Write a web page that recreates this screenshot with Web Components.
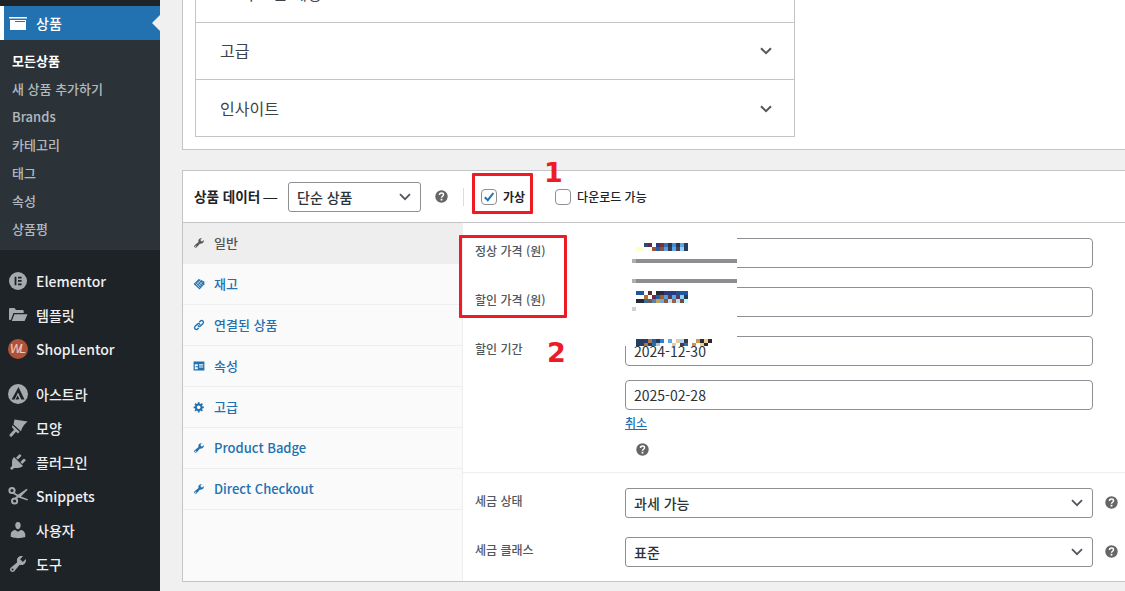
<!DOCTYPE html>
<html lang="ko">
<head>
<meta charset="utf-8">
<title>상품 편집</title>
<style>
  html, body { margin: 0; height: 591px; overflow: hidden; background: #f0f0f1; }
  body { font-family: "Noto Sans CJK KR", "Noto Sans", sans-serif; }
</style>
</head>
<body>
<admin-page>
  <admin-sidebar slot="sidebar">
    <menu-item icon="box" current>상품</menu-item>
    <sub-menu>
      <sub-item current>모든상품</sub-item>
      <sub-item>새 상품 추가하기</sub-item>
      <sub-item>Brands</sub-item>
      <sub-item>카테고리</sub-item>
      <sub-item>태그</sub-item>
      <sub-item>속성</sub-item>
      <sub-item>상품평</sub-item>
    </sub-menu>
    <menu-group>
      <menu-item icon="elementor">Elementor</menu-item>
      <menu-item icon="folder">템플릿</menu-item>
      <menu-item icon="shoplentor">ShopLentor</menu-item>
    </menu-group>
    <menu-group>
      <menu-item icon="astra">아스트라</menu-item>
      <menu-item icon="brush">모양</menu-item>
      <menu-item icon="plug">플러그인</menu-item>
      <menu-item icon="scissors">Snippets</menu-item>
      <menu-item icon="users">사용자</menu-item>
      <menu-item icon="wrench">도구</menu-item>
    </menu-group>
  </admin-sidebar>

  <top-box>
    <box-row>그 기 모은 계정</box-row>
    <box-row>고급</box-row>
    <box-row>인사이트</box-row>
  </top-box>

  <product-data>
    <tab-item icon="wrench" current>일반</tab-item>
    <tab-item icon="tag">재고</tab-item>
    <tab-item icon="link">연결된 상품</tab-item>
    <tab-item icon="attrs">속성</tab-item>
    <tab-item icon="gear">고급</tab-item>
    <tab-item icon="wrench">Product Badge</tab-item>
    <tab-item icon="wrench">Direct Checkout</tab-item>

    <field-group slot="fields">
      <form-field label="정상 가격 (원)"><text-box></text-box></form-field>
      <form-field label="할인 가격 (원)"><text-box></text-box></form-field>
      <form-field label="할인 기간" tight>
        <text-box>2024-12-30</text-box>
        <text-box>2025-02-28</text-box>
        <cancel-link>취소</cancel-link>
        <help-mark class="below"></help-mark>
      </form-field>
    </field-group>
    <field-group slot="fields" last>
      <form-field label="세금 상태" help><select-box>과세 가능</select-box></form-field>
      <form-field label="세금 클래스" help><select-box>표준</select-box></form-field>
    </field-group>
  </product-data>

  <censor-block></censor-block>
  <red-mark style="left:472px;top:173px;width:61px;height:41px"></red-mark>
  <red-mark style="left:459px;top:235px;width:108px;height:83px"></red-mark>
  <red-number style="left:544px;top:157px">1</red-number>
  <red-number style="left:547px;top:337px">2</red-number>
</admin-page>

<script>
const ICONS = {
  box: '<path fill="currentColor" fill-rule="evenodd" d="M1 4h18v1.6H1zM2 7h16v10H2zM7 8v1h10V8z"/>',
  elementor: '<circle cx="10" cy="10" r="9" fill="currentColor"/><path fill="#1d2327" d="M6.6 5.8h1.8v8.4H6.6zM10 5.8h3.6v1.7H10zM10 9.1h3.6v1.7H10zM10 12.5h3.6v1.7H10z"/>',
  folder: '<path fill="currentColor" d="M1 4.5c0-.8.5-1.5 1.3-1.5h4.2l1.5 2h6.5c.7 0 1.2.5 1.2 1.2V8H5.5L2.8 15H2c-.6 0-1-.5-1-1zM6.4 9.2H19.5L16.6 16H3.8z"/>',
  shoplentor: '<circle cx="10" cy="10" r="10" fill="#b0523a"/><text x="10" y="14" text-anchor="middle" font-family="Liberation Sans, sans-serif" font-size="12" font-style="italic" fill="#ecd0c6" textLength="16">WL</text>',
  astra: '<circle cx="10" cy="10" r="10" fill="currentColor"/><path fill="#1d2327" d="M10.5 3l6 12.5h-3.2l-3.3-7-3.4 7H3.6zM9.6 11.2l1.8 3.8-1.5.5H7.6z"/>',
  brush: '<path fill="currentColor" d="M6.5 1.5L19.5 3.5 16 7l-2 3.2-1 3L5.5 6.5zM4.6 7.2l7 6.6-1.6 1.6-2-1.6-4.2 4.6c-1.1 1.1-3.1-.6-2-2.1l4.3-4.6-2.2-2.6z"/>',
  plug: '<path fill="currentColor" d="M13.11 4.36L9.87 7.6 8 5.73l3.24-3.24c.35-.34 1.05-.2 1.56.32.52.51.66 1.21.31 1.55zm-8 1.77l.91-1.12 9.01 9.01-1.19.84c-.71.71-2.63 1.16-3.82 1.16H6.14L4.9 17.26c-.59.59-1.54.59-2.12 0-.59-.58-.59-1.53 0-2.12l1.24-1.24v-3.88c0-1.13.4-3.19 1.09-3.89zm7.26 3.97l3.24-3.24c.34-.35 1.04-.21 1.55.31.52.51.66 1.21.31 1.55l-3.24 3.25z"/>',
  scissors: '<g fill="none" stroke="currentColor" stroke-width="2"><circle cx="4" cy="4.5" r="2.6"/><circle cx="6.6" cy="15" r="2.6"/></g><path fill="currentColor" d="M5.8 6.2l4.2 2.6 8.6-6 1 1-6.6 6.8 7 2.6-.6 1.3-9-3-2.8 2.2-1.1-1.4 2.3-2.2-4.5-2.6z"/>',
  users: '<path fill="currentColor" d="M10 9.25c-2.27 0-2.73-3.44-2.73-3.44C7 4.02 7.82 2 9.97 2c2.16 0 2.98 2.02 2.71 3.81 0 0-.41 3.44-2.68 3.44zm0 2.57L12.72 10c2.39 0 4.52 2.33 4.52 4.53v2.49s-3.65 1.13-7.24 1.13c-3.65 0-7.24-1.13-7.24-1.13v-2.49c0-2.25 1.94-4.48 4.47-4.48z"/>',
  wrench: '<path fill="currentColor" fill-rule="evenodd" d="M16.68 9.77c-1.34 1.34-3.3 1.67-4.95.99l-5.41 6.52c-.99.99-2.59.99-3.58 0s-.99-2.59 0-3.57l6.52-5.42c-.68-1.65-.35-3.61.99-4.95 1.28-1.28 3.12-1.62 4.72-1.06l-2.89 2.89 2.82 2.82 2.86-2.87c.53 1.58.18 3.39-1.08 4.65zM3.81 16.21c.4.39 1.04.39 1.43 0 .4-.4.4-1.04 0-1.43-.39-.4-1.03-.4-1.43 0-.39.39-.39 1.03 0 1.43z"/>',
  tag: '<path fill="currentColor" d="M9.5 1.5L19 6v4.5L11 19 1 10.2z"/><path stroke="#fafafa" stroke-width=".9" fill="none" d="M6 6.5l8 8M9 4.5l8 8M4 9l8 8M13 3.5L5 12M16 6l-8 9"/>',
  link: '<g fill="none" stroke="currentColor" stroke-width="2.3" stroke-linecap="round"><path d="M8.6 11.4a3 3 0 0 0 4.2 0l4-4a3 3 0 0 0-4.2-4.2l-1.5 1.5"/><path d="M11.4 8.6a3 3 0 0 0-4.2 0l-4 4a3 3 0 0 0 4.2 4.2l1.5-1.5"/></g>',
  attrs: '<path fill="currentColor" fill-rule="evenodd" d="M1 2.5h18v15H1zM3 7v8.5h5V12H4v-1.6h4V7zm7 0v2h7V7zm0 4v1.5h7V11z"/>',
  gear: '<path fill="currentColor" fill-rule="evenodd" d="M18 12h-2.18c-.17.7-.44 1.35-.81 1.93l1.54 1.54-2.1 2.1-1.54-1.54c-.58.36-1.23.63-1.91.79V19H8v-2.18c-.68-.16-1.33-.43-1.91-.79l-1.54 1.54-2.12-2.12 1.54-1.54c-.36-.58-.63-1.23-.79-1.91H1V9.03h2.17c.16-.7.44-1.35.8-1.94L2.43 5.55l2.1-2.1 1.54 1.54c.58-.37 1.24-.64 1.93-.81V2h3v2.18c.68.16 1.33.43 1.91.79l1.54-1.54 2.12 2.12-1.54 1.54c.36.59.64 1.24.8 1.94H18V12zm-8.5 1.5c1.66 0 3-1.34 3-3s-1.34-3-3-3-3 1.34-3 3 1.34 3 3 3z"/>'
};
const svgIcon = (name, size) => `<svg width="${size}" height="${size}" viewBox="0 0 20 20" aria-hidden="true">${ICONS[name]}</svg>`;
const CHEVRON = '<svg width="12" height="8" viewBox="0 0 12 8"><path d="M1 1.2l5 5 5-5" fill="none" stroke="#50575e" stroke-width="2"/></svg>';

// small helper, every element here only needs a shadow root with fixed markup
function define(tag, html) {
  customElements.define(tag, class extends HTMLElement {
    connectedCallback() {
      if (this.shadowRoot) return;
      this.attachShadow({ mode: 'open' });
      this.shadowRoot.innerHTML = typeof html === 'function' ? html(this) : html;
    }
  });
}

define('admin-page', `
  <style>
    :host { display: flex; position: relative; width: 1125px; height: 591px; overflow: hidden; background: #f0f0f1; }
    .side { flex: 0 0 160px; }
    main { flex: 1; min-width: 0; display: flex; flex-direction: column; gap: 20px; padding-left: 22px; margin-right: -30px; margin-top: -35px; }
  </style>
  <div class="side"><slot name="sidebar"></slot></div>
  <main><slot></slot></main>`);

define('admin-sidebar', `
  <style>
    :host { display: block; height: 591px; background: #1d2327; padding-top: 6px; box-sizing: border-box; color: #f0f0f1; font-weight: 500; }
  </style>
  <slot></slot>`);

define('menu-item', el => `
  <style>
    :host { display: flex; position: relative; align-items: center; height: 34px; font-size: 14px; line-height: 20px; color: #f0f0f1; padding-left: 8px; box-sizing: border-box; }
    :host([current]) { background: #2271b1; color: #fff; box-shadow: inset 4px 0 0 #fff; }
    .ic { width: 20px; height: 20px; margin-right: 8px; color: #a7aaad; display: block; flex: none; }
    :host([current]) .ic { color: #fff; }
    svg { display: block; }
    .arrow { position: absolute; right: 0; top: 9px; width: 0; height: 0; border: 8px solid transparent; border-right-color: #f0f0f1; border-left: 0; }
  </style>
  <span class="ic">${svgIcon(el.getAttribute('icon'), 20)}</span><slot></slot>
  ${el.hasAttribute('current') ? '<span class="arrow"></span>' : ''}`);

define('sub-menu', `
  <style>:host { display: block; background: #2c3338; padding: 7px 0; }</style>
  <slot></slot>`);

define('sub-item', `
  <style>
    :host { display: block; height: 28px; padding-left: 12px; font-size: 13px; line-height: 28px; color: rgba(240,246,252,.7); }
    :host([current]) { color: #fff; font-weight: 700; }
  </style>
  <slot></slot>`);

define('menu-group', `
  <style>:host { display: block; margin-top: 14px; margin-bottom: -3px; }</style>
  <slot></slot>`);

define('top-box', `
  <style>
    :host { display: block; background: #fff; border: 1px solid #c3c4c7; padding: 0 12px 12px; }
    .inner { width: 600px; border: 1px solid #c3c4c7; border-top: 0; box-sizing: border-box; }
  </style>
  <div class="inner"><slot></slot></div>`);

define('box-row', `
  <style>
    :host { display: flex; align-items: center; justify-content: space-between; height: 57px; box-sizing: border-box; padding: 0 22px 2px 24px; border-bottom: 1px solid #c3c4c7; font-size: 16px; line-height: 24px; color: #3c434a; }
    :host(:last-child) { border-bottom: 0; height: 56px; padding-bottom: 0; }
    svg { margin-top: 2px; }
  </style>
  <slot></slot>${CHEVRON}`);

define('product-data', `
  <style>
    :host { display: block; background: #fff; border: 1px solid #c3c4c7; height: 412px; box-sizing: border-box; }
    header { display: flex; align-items: center; height: 52px; box-sizing: border-box; border-bottom: 1px solid #c3c4c7; padding-left: 11px; font-size: 12px; color: #1d2327; }
    h2 { margin: 0; font-size: 13.6px; line-height: 20px; font-weight: 600; color: #1d2327; white-space: nowrap; width: 85px; }
    h2 span { font: 400 14px/20px "Liberation Sans", sans-serif; margin-left: 3px; }
    .type { font-weight: 500; }
    .sep { width: 1px; height: 18px; background: #dcdcde; margin: 0 17px 0 15px; }
    .q { margin-left: 14px; }
    label { display: flex; align-items: center; gap: 6px; font-weight: 500; line-height: 16px; }
    .virtual { gap: 6px; font-weight: 600; margin-right: 30px; }
    .body { display: flex; height: 358px; }
    nav { flex: 0 0 280px; box-sizing: border-box; background: #fafafa; border-right: 1px solid #eee; }
    .fields { flex: 1; min-width: 0; }
    .box { width: 16px; height: 16px; box-sizing: border-box; border: 1px solid #8c8f94; border-radius: 4px; background: #fff; display: block; }
    .box svg { display: block; margin: 0; }
  </style>
  <header>
    <h2>상품 데이터<span>—</span></h2>
    <select-box class="type" style="width:133px;margin-left:9px">단순 상품</select-box>
    <help-mark class="q"></help-mark>
    <span class="sep"></span>
    <label class="virtual"><span class="box"><svg width="14" height="14" viewBox="0 0 14 14"><path d="M2.8 7.2l3 3 5.6-7.2" fill="none" stroke="#2271b1" stroke-width="2"/></svg></span>가상</label>
    <label><span class="box"></span>다운로드 가능</label>
  </header>
  <div class="body">
    <nav><slot></slot></nav>
    <div class="fields"><slot name="fields"></slot></div>
  </div>`);

define('tab-item', el => `
  <style>
    :host { display: flex; align-items: center; height: 41px; box-sizing: border-box; padding: 0 0 0 10px; gap: 9px; border-bottom: 1px solid #eee; font-size: 13px; font-weight: 500; line-height: 20px; color: #2271b1; }
    :host([current]) { background: #eee; color: #555; border-bottom-color: #eee; margin-right: -1px; }
    svg { display: block; flex: none; }
  </style>
  ${svgIcon(el.getAttribute('icon'), 12)}<slot></slot>`);

define('field-group', `
  <style>
    :host { display: flex; flex-direction: column; gap: 19px; padding: 15px 0 14px 12px; border-bottom: 1px solid #eee; }
    :host([last]) { border-bottom: 0; }
  </style>
  <slot></slot>`);

define('form-field', el => `
  <style>
    :host { display: flex; position: relative; font-size: 12px; font-weight: 500; color: #50575e; }
    label { flex: 0 0 150px; line-height: 18px; padding-top: 4px; }
    .ctl { width: 468px; display: flex; flex-direction: column; gap: 14px; }
    .h { position: absolute; left: 630px; top: 8px; }
  </style>
  <label>${el.getAttribute('label')}</label>
  <div class="ctl"><slot></slot></div>
  ${el.hasAttribute('help') ? '<help-mark class="h"></help-mark>' : ''}`);

define('text-box', `
  <style>
    :host { display: block; height: 30px; box-sizing: border-box; border: 1px solid #8c8f94; border-radius: 4px; background: #fff; padding: 0 8px; font-size: 14px; font-weight: 400; line-height: 28px; color: #2c3338; }
  </style>
  <slot></slot>`);

define('select-box', `
  <style>
    :host { display: flex; align-items: center; justify-content: space-between; height: 30px; box-sizing: border-box; border: 1px solid #8c8f94; border-radius: 3px; background: #fff; padding: 0 9px 0 8px; font-size: 14px; line-height: 28px; color: #2c3338; font-weight: 500; }
    svg { display: block; }
  </style>
  <slot></slot><svg width="12" height="8" viewBox="0 0 12 8"><path d="M1 1.2l5 5 5-5" fill="none" stroke="#50575e" stroke-width="1.8"/></svg>`);

define('cancel-link', `
  <style>
    :host { display: block; margin-top: -10px; font-size: 12px; line-height: 18px; color: #2271b1; text-decoration: underline; }
  </style>
  <slot></slot>`);

define('help-mark', `
  <style>
    :host { display: block; width: 13px; height: 13px; flex: none; }
    :host(.below) { margin: -3px 0 2px 11px; }
    svg { display: block; }
  </style>
  <svg width="13" height="13" viewBox="0 0 13 13"><circle cx="6.5" cy="6.5" r="6.2" fill="#666"/><path d="M4.5 5c0-1.2.9-1.9 2-1.9s2 .7 2 1.7c0 1.5-2 1.4-2 3" fill="none" stroke="#fff" stroke-width="1.5"/><rect x="5.6" y="8.8" width="1.8" height="1.7" fill="#fff"/></svg>`);

// the pixelated patch someone pasted over the price inputs
const PATCH = [
  [644, 243, '2a4a7f 5a3040 fff 2e3a80 7a3040 3a70b0 2a3550 3a90d8 2a3550 5aa8e0 2a3a60'],
  [636, 247, 'ffc ffc fff fff a05030 2060a0 8a5040 5a9fd8 3a3a50 58a8e8 5a3a50 90d0f0 2a3a60'],
  [636, 291, '2255a0 2255a0 fff 5a2a3a fff 2a2a3a 2a2a3a 2a3a80 2a3a80 2a3a80 2a4a90 2255a0 2255a0'],
  [636, 295, 'fff fff b07030 fff 6a2a40 2060a0 a06030 5a9fd8 5a3a50 58a8e8 5a3a50 90d0f0 2a3a50'],
  [636, 299, '252a30 252a30 3a6a9a 6a5a50 5a80b0 c8a060 70a8d8 90583a bfe0f0 a06040 c0e0f0 704a3a c8f8ff'],
  [636, 339, '24405f 24405f 2a3a70 a87840 2a5aa0 2a3a50 2f80d0 fff 60a8e8 fff e8c8a0 a0d8f0 3a3a50 fff fff c89850 2a2a30 f0d090 2a2a30'],
  [636, 343, '2a3a60 2a3a70 a87840 2a3a50 2070b0 a0c8e8 fff fff fff e8c8a0 fff 5a3040 2a70b0 fff c89850 fff f0d090 2a2a30 fff']
];
define('censor-block', () => {
  let rects = '';
  for (const [x0, y, cols] of PATCH) {
    cols.split(' ').forEach((c, i) => {
      const h = y === 343 ? 3 : 4;
      rects += `<rect x="${x0 + i * 4 - 624}" y="${y - 237}" width="4" height="${h}" fill="#${c}"/>`;
    });
  }
  const stripe = y => `<rect x="8" y="${y - 237}" width="4" height="4" fill="#b0b0b0"/><rect x="12" y="${y - 237}" width="101" height="4" fill="#8e8e92"/>`;
  return `
  <style>
    :host { display: block; position: absolute; left: 624px; top: 237px; width: 113px; height: 109px; background: #fff; }
    svg { display: block; }
  </style>
  <svg width="113" height="109" shape-rendering="crispEdges">${rects}${stripe(259)}${stripe(279)}<rect x="8" y="70" width="4" height="4" fill="#d0d0d0"/></svg>`;
});

define('red-mark', `
  <style>:host { display: block; position: absolute; box-sizing: border-box; border: 3px solid #ed1c24; border-radius: 1px; }</style>`);

define('red-number', `
  <style>:host { display: block; position: absolute; font: bold 27px/32px "DejaVu Sans", sans-serif; color: #ed1c24; }</style>
  <slot></slot>`);
</script>
</body>
</html>
